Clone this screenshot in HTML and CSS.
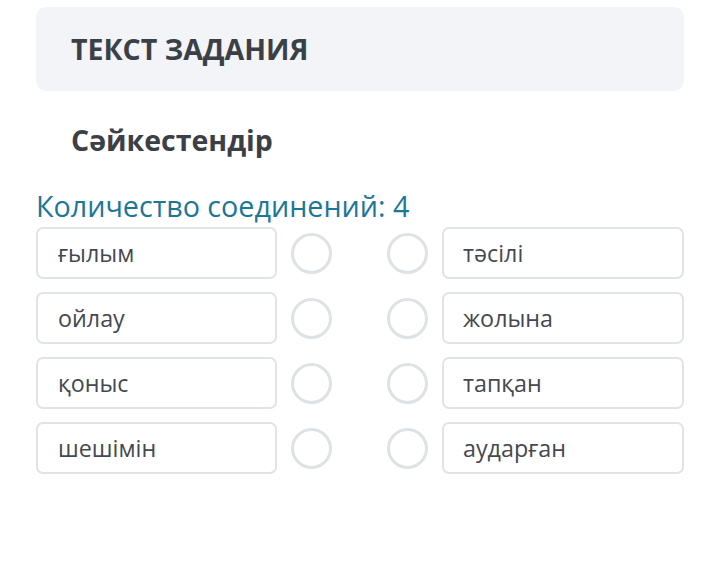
FILE: index.html
```html
<!DOCTYPE html>
<html lang="ru">
<head>
<meta charset="utf-8">
<link rel="stylesheet" href="styles.css">
</head>
<body>
<div class="page">
  <div class="task-head"><h1>ТЕКСТ ЗАДАНИЯ</h1></div>
  <h2 class="task-title">Сәйкестендір</h2>
  <div class="count">Количество соединений: 4</div>
  <div class="rows">
    <div class="row"><div class="item">ғылым</div><span class="dot"></span><span class="dot"></span><div class="item">тәсілі</div></div>
    <div class="row"><div class="item">ойлау</div><span class="dot"></span><span class="dot"></span><div class="item">жолына</div></div>
    <div class="row"><div class="item">қоныс</div><span class="dot"></span><span class="dot"></span><div class="item">тапқан</div></div>
    <div class="row"><div class="item">шешімін</div><span class="dot"></span><span class="dot"></span><div class="item">аударған</div></div>
  </div>
</div>
</body>
</html>
```
FILE: styles.css
```css
html, body { margin: 0; padding: 0; background: #fff; }
body { font-family: "Open Sans", "Noto Sans", sans-serif; color: #3b4047; }
.page { width: 648px; margin-left: 36px; padding-top: 7px; }
.task-head { background: #f3f4f7; border-radius: 10px; height: 84px; display: flex; align-items: center; padding-left: 35px; }
.task-head h1 { margin: 0; font-size: 28.5px; font-weight: 700; line-height: 36px; color: #3b4047; }
.task-title { margin: 30px 0 0 35px; font-size: 28.5px; font-weight: 700; line-height: 38px; color: #3b4047; }
.count { margin-top: 29px; font-size: 28.7px; line-height: 36px; color: #1c7796; }
.rows { margin-top: 3px; display: flex; flex-direction: column; gap: 13px; }
.row { display: flex; align-items: center; height: 52px; }
.item { box-sizing: border-box; width: 241px; height: 52px; border: 2px solid #e1e4e7; border-radius: 7px; display: flex; align-items: center; padding-left: 20px; font-size: 23.3px; color: #45494f; }
.row .item:last-child { width: 242px; padding-left: 19px; }
.dot { box-sizing: border-box; width: 41px; height: 41px; border: 3px solid #dfe2e5; border-radius: 50%; }
.dot:nth-of-type(1) { margin-left: 14px; }
.dot:nth-of-type(2) { margin-left: 55px; margin-right: 14px; }
```
